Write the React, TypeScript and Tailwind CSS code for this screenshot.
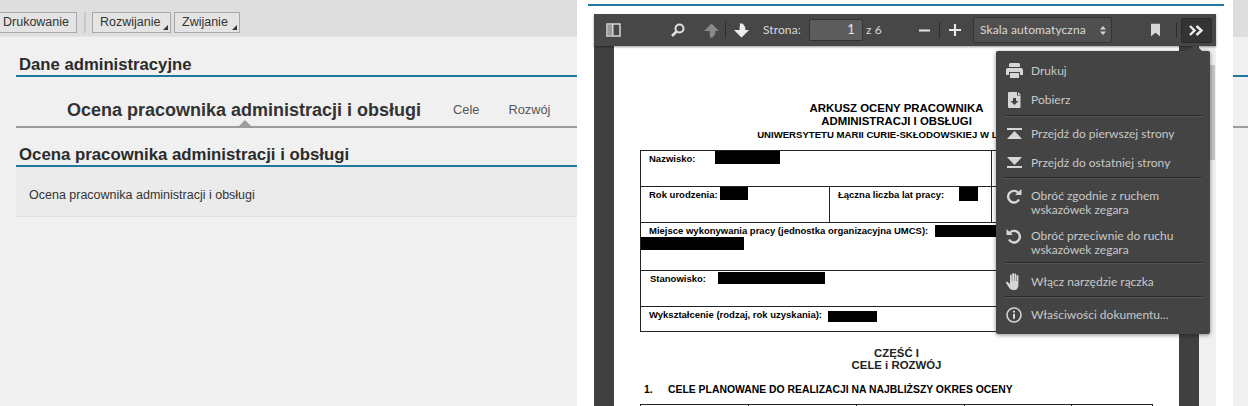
import React from "react";

const Redact = ({ left, top, w, h }: { left: number; top: number; w: number; h: number }) => (
  <span className="absolute bg-black" style={{ left, top, width: w, height: h }} />
);

const Sep = ({ mb }: { mb: number }) => (
  <div className="h-px bg-[#2a2a2a] mx-[8px] shadow-[0_1px_0_#555]" style={{ marginBottom: mb }} />
);

const Item = ({ icon, children, h = 29, multi }: { icon: React.ReactNode; children: React.ReactNode; h?: number; multi?: boolean }) => (
  <div className={`flex ${multi ? "items-start pt-[4px]" : "items-center"}`} style={{ height: h }}>
    <div className="w-[35px] h-[14px] flex items-center justify-center shrink-0 pl-[1px]">{icon}</div>
    <div className="leading-[14px]">{children}</div>
  </div>
);

const c = "#d6d6d6";

const IPrinter = () => (
  <svg width="17" height="15" viewBox="0 0 17 15" fill={c}>
    <path d="M4 0h9l1 1v3H3V1zM2 5h13a2 2 0 0 1 2 2v5h-3V9H3v3H0V7a2 2 0 0 1 2-2zM4 10h9v5H4z" />
  </svg>
);
const IDownload = () => (
  <svg width="13" height="16" viewBox="0 0 13 16" fill={c}>
    <path d="M1 0h8v3.500h3.500V15a1 1 0 0 1-1 1H1a1 1 0 0 1-1-1V1a1 1 0 0 1 1-1z" />
    <path d="M10 0l3 3h-3z" />
    <path d="M5 6h3v3h2.500l-4 4-4-4H5z" fill="#444" />
  </svg>
);
const IFirst = () => (
  <svg width="15" height="11" viewBox="0 0 15 11" fill={c}>
    <rect x="0" y="0" width="15" height="2" />
    <path d="M7.500 3L15 11H0z" />
  </svg>
);
const ILast = () => (
  <svg width="15" height="11" viewBox="0 0 15 11" fill={c}>
    <rect x="0" y="9" width="15" height="2" />
    <path d="M7.500 8L15 0H0z" />
  </svg>
);
const ICw = () => (
  <svg width="16" height="15" viewBox="0 0 16 15" fill="none" stroke={c} strokeWidth="2.400">
    <path d="M13 10.500A5.800 5.800 0 1 1 12 3.500" />
    <path d="M9 6h6.500V0z" fill={c} stroke="none" />
  </svg>
);
const ICcw = () => (
  <svg width="16" height="15" viewBox="0 0 16 15" fill="none" stroke={c} strokeWidth="2.400">
    <path d="M3 10.500A5.800 5.800 0 1 0 4 3.500" />
    <path d="M7 6H.5V0z" fill={c} stroke="none" />
  </svg>
);
const IHand = () => (
  <svg width="16" height="17" viewBox="0 0 16 17" fill={c}>
    <path d="M4 2.500a.9.900 0 0 1 1.800 0V8h.4V1a.9.900 0 0 1 1.800 0v7h.4V1.500a.9.900 0 0 1 1.800 0V8h.4V3a.9.900 0 0 1 1.800 0v9c0 3-1.500 5-4.500 5H7c-2 0-3-1-4-2.500L0 10c-.5-1 .7-1.800 1.500-1L4 11z" />
  </svg>
);
const IInfo = () => (
  <svg width="16" height="16" viewBox="0 0 16 16" fill="none" stroke={c} strokeWidth="1.600">
    <circle cx="8" cy="8" r="7" />
    <circle cx="8" cy="4.700" r="1.100" fill={c} stroke="none" />
    <rect x="7" y="6.800" width="2" height="5" fill={c} stroke="none" />
  </svg>
);

const Btn = ({ children, caret, className = "" }: { children: React.ReactNode; caret?: boolean; className?: string }) => (
  <div className={`relative h-[21px] flex items-center pl-[7px] bg-[#e4e4e4] border border-[#a8a8a8] text-[12.500px] text-[#333] shrink-0 ${className}`}>
    {children}
    {caret && (
      <svg className="absolute right-[2px] bottom-[2px]" width="5" height="5" viewBox="0 0 5 5" fill="#333">
        <path d="M5 0v5H0z" />
      </svg>
    )}
  </div>
);

const TRow = ({ h, children }: { h: number; children?: React.ReactNode }) => (
  <div className="relative flex border-b border-[#222]" style={{ height: h }}>
    {children}
  </div>
);

export default function App() {
  return (
    <div className="w-[1248px] h-[406px] overflow-hidden flex bg-white font-['Liberation_Sans',Arial,sans-serif]">
      {/* left SAP panel */}
      <div className="w-[577px] shrink-0 flex flex-col bg-[#f0f0f0] overflow-hidden">
        <div className="h-[37px] shrink-0 bg-[#dedede] flex items-start pt-[12px] border-b border-[#e6e6e6]">
          <Btn className="w-[82px] ml-[-5px]">Drukowanie</Btn>
          <div className="w-[2px] h-[21px] bg-[#c8c8c8] ml-[7px] shrink-0" />
          <Btn caret className="w-[79px] ml-[6px]">Rozwijanie</Btn>
          <Btn caret className="w-[66px] ml-[3px]">Zwijanie</Btn>
        </div>
        <div className="pl-[16px] flex flex-col">
          <div className="h-[40px] border-b-2 border-[#20789c] flex items-end pl-[3px] text-[16.700px] leading-[20px] font-bold text-[#2b2b2b]">
            Dane administracyjne
          </div>
          <div className="relative h-[51px] border-b-2 border-[#9c9c9c] flex items-center pl-[51px] pt-[17px] text-[#333]">
            <span className="text-[18px] font-bold text-[#333]">Ocena pracownika administracji i obsługi</span>
            <span className="ml-[32px] text-[12.800px] text-[#555]">Cele</span>
            <span className="ml-[29px] text-[12.800px] text-[#555]">Rozwój</span>
            <div className="absolute left-[223px] bottom-0 w-0 h-0 border-x-[6px] border-x-transparent border-b-[6px] border-b-[#9c9c9c]" />
          </div>
          <div className="h-[39px] border-b-2 border-[#20789c] flex items-end pl-[3px] text-[16.800px] leading-[20px] font-bold text-[#2b2b2b]">
            Ocena pracownika administracji i obsługi
          </div>
          <div className="h-[50px] bg-[#ebebeb] border-b border-[#e0e0e0] flex items-center pl-[13px] pt-[8px] text-[12.500px] text-[#333]">
            Ocena pracownika administracji i obsługi
          </div>
        </div>
      </div>

      {/* middle */}
      <div className="w-[656px] shrink-0 bg-white flex flex-col">
        <div className="h-[2px] mt-[4px] ml-[11px] mr-[9px] bg-[#20789c] shrink-0" />
        <div className="relative ml-[17px] mt-[8px] w-[622px] flex-1 flex flex-col font-['Lato',sans-serif]">
          {/* pdf toolbar */}
          <div className="h-[32px] shrink-0 bg-[#474747] flex items-center text-[12px] tracking-[0.100px] text-[#d9d9d9] shadow-[0_1px_2px_rgba(0,0,0,0.4)] z-10 whitespace-nowrap">
            <svg className="ml-[12px] shrink-0" width="15" height="14" viewBox="0 0 15 14">
              <rect x="1" y="1" width="13" height="12" fill="none" stroke="#d6d6d6" strokeWidth="1.500" />
              <rect x="2" y="2" width="4" height="10" fill="#9a9a9a" />
              <rect x="6" y="1" width="1.500" height="12" fill="#d6d6d6" />
            </svg>
            <svg className="ml-[50px] shrink-0" width="14" height="14" viewBox="0 0 14 14" fill="none" stroke="#e0e0e0">
              <circle cx="8.500" cy="5.500" r="4" strokeWidth="2" />
              <path d="M5.500 8.500L1 13" strokeWidth="2.600" />
            </svg>
            <svg className="ml-[19px] shrink-0" width="15" height="16" viewBox="0 0 16 16" fill="#8a8a8a">
              <path d="M8 0l8 8h-4v3l-2 3-1 1H6c1-2 0-3 0-4V8H0z" transform="translate(0 1)" />
            </svg>
            <div className="w-px h-[16px] bg-[#2e2e2e] ml-[6px] shrink-0" />
            <svg className="ml-[8px] shrink-0" width="15" height="16" viewBox="0 0 16 16" fill="#eeeeee">
              <path d="M8 16l8-8h-4V5l-2-3-1-1H6c1 2 0 3 0 4v3H0z" />
            </svg>
            <span className="ml-[14px] w-[37px] shrink-0">Strona:</span>
            <div className="ml-[9px] w-[54px] h-[22px] bg-[#5c5c5c] border border-[#333] rounded-[2px] flex items-center justify-end pr-[7px] text-[#e6e6e6] text-[13px] shrink-0">
              1
            </div>
            <span className="ml-[3px] w-[16px] shrink-0">z 6</span>
            <svg className="ml-[37px] shrink-0" width="11" height="3" viewBox="0 0 11 3" fill="#e6e6e6">
              <rect width="11" height="2" y="0.500" />
            </svg>
            <div className="w-px h-[16px] bg-[#2e2e2e] ml-[9px] shrink-0" />
            <svg className="ml-[9px] shrink-0" width="12" height="12" viewBox="0 0 11 11" fill="#e6e6e6">
              <path d="M4.500 0h2v4.500H11v2H6.500V11h-2V6.500H0v-2h4.500z" />
            </svg>
            <div className="ml-[12px] w-[139px] h-[26px] bg-[#4f4f4f] border border-[#343434] rounded-[2px] flex items-center pl-[6px] shrink-0">
              <span className="w-[120px]">Skala automatyczna</span>
              <svg width="6" height="9" viewBox="0 0 6 9" fill="#d6d6d6">
                <path d="M3 0l3 3.500H0zM3 9L0 5.500h6z" />
              </svg>
            </div>
            <svg className="ml-[39px] shrink-0" width="9" height="14" viewBox="0 0 10 14" fill="#d8d8d8">
              <path d="M0 0h10v14l-5-4-5 4z" />
            </svg>
            <div className="w-px h-[16px] bg-[#2e2e2e] ml-[16px] shrink-0" />
            <div className="ml-[4px] w-[31px] h-[25px] bg-[#343434] border border-[#2a2a2a] rounded-[2px] flex items-center justify-center shrink-0">
              <svg width="15" height="11" viewBox="0 0 15 11" fill="none" stroke="#eeeeee" strokeWidth="2.400">
                <path d="M1 1l4.500 4.500L1 10M7.500 1l5 4.500-5 4.500" />
              </svg>
            </div>
          </div>

          {/* pdf body */}
          <div className="flex-1 flex min-h-0">
            <div className="w-[20px] bg-[#404040]" />
            <div className="w-[565px] bg-white relative font-['Liberation_Sans',Arial,sans-serif] text-black overflow-hidden">
              <div className="pt-[56px] flex flex-col items-center font-bold">
                <div className="text-[11.400px] leading-[13px]">ARKUSZ OCENY PRACOWNIKA</div>
                <div className="text-[11.400px] leading-[13px]">ADMINISTRACJI I OBSŁUGI</div>
                <div className="text-[9.600px] leading-[13px] whitespace-nowrap">UNIWERSYTETU MARII CURIE-SKŁODOWSKIEJ W LUBLINIE</div>
              </div>
              <div className="ml-[26px] mt-[9px] w-[513px] border border-b-0 border-[#222] text-[9.500px] font-bold leading-[12px]">
                <TRow h={36}>
                  <div className="w-[351px] border-r border-[#222] pl-[8px] pt-[2px]">Nazwisko:</div>
                  <Redact left={74} top={0} w={65} h={13} />
                </TRow>
                <TRow h={36}>
                  <div className="w-[189px] border-r border-[#222] pl-[8px] pt-[2px]">Rok urodzenia:</div>
                  <div className="w-[162px] border-r border-[#222] pl-[8px] pt-[2px]">Łączna liczba lat pracy:</div>
                  <Redact left={79} top={0} w={28} h={13} />
                  <Redact left={318} top={0} w={19} h={14} />
                </TRow>
                <TRow h={48}>
                  <div className="pl-[8px] pt-[2px]">Miejsce wykonywania pracy (jednostka organizacyjna UMCS):</div>
                  <Redact left={294} top={2} w={66} h={12} />
                  <Redact left={0} top={14} w={103} h={13} />
                </TRow>
                <TRow h={36}>
                  <div className="pl-[9px] pt-[2px]">Stanowisko:</div>
                  <Redact left={77} top={1} w={107} h={12} />
                </TRow>
                <TRow h={25}>
                  <div className="pl-[8px] pt-[2px]">Wykształcenie (rodzaj, rok uzyskania):</div>
                  <Redact left={187} top={4} w={49} h={11} />
                </TRow>
              </div>
              <div className="mt-[15px] flex flex-col items-center text-[11.400px] leading-[12px] font-bold text-[#222]">
                <div>CZĘŚĆ I</div>
                <div>CELE i ROZWÓJ</div>
              </div>
              <div className="mt-[13px] ml-[30px] flex text-[10.400px] leading-[12px] font-bold">
                <span className="w-[24px]">1.</span>
                <span className="whitespace-nowrap">CELE PLANOWANE DO REALIZACJI NA NAJBLIŻSZY OKRES OCENY</span>
              </div>
              <div className="mt-[8px] ml-[26px] w-[513px] h-[8px] border-t border-x border-[#222] flex">
                <div className="w-[108px] border-r border-[#222]" />
                <div className="w-[108px] border-r border-[#222]" />
                <div className="w-[108px] border-r border-[#222]" />
                <div className="w-[107px] border-r border-[#222]" />
              </div>
            </div>
            <div className="w-[20px] bg-[#404040]" />
            <div className="w-[17px] bg-[#f0f0f0] flex justify-end pr-[1px]">
              <div className="w-[5px] h-[95px] mt-[19px] bg-[#c4c4c4]" />
            </div>
          </div>

          {/* dropdown menu */}
          <div className="absolute left-[402px] top-[37px] w-[214px] h-[283px] z-20 bg-[#444444] rounded-[2px] shadow-[0_1px_4px_rgba(0,0,0,0.45)] text-[12px] text-[#c8c8c8] pt-[5px]">
            <div className="absolute right-[8px] top-[-7px] w-0 h-0 border-x-[7px] border-x-transparent border-b-[7px] border-b-[#444444]" />
            <Item icon={<IPrinter />}>Drukuj</Item>
            <Item icon={<IDownload />} h={30}>Pobierz</Item>
            <Sep mb={3} />
            <Item icon={<IFirst />}>Przejdź do pierwszej strony</Item>
            <Item icon={<ILast />}>Przejdź do ostatniej strony</Item>
            <Sep mb={7} />
            <Item icon={<ICw />} h={40} multi>Obróć zgodnie z ruchem<br />wskazówek zegara</Item>
            <Item icon={<ICcw />} h={37} multi>Obróć przeciwnie do ruchu<br />wskazówek zegara</Item>
            <Sep mb={4} />
            <Item icon={<IHand />}>Włącz narzędzie rączka</Item>
            <Sep mb={4} />
            <Item icon={<IInfo />} h={28}>Właściwości dokumentu...</Item>
          </div>
        </div>
      </div>

      {/* right strip */}
      <div className="flex-1 bg-[#f0f0f0] flex flex-col">
        <div className="h-[37px] bg-[#dedede]" />
        <div className="h-[40px] border-b-2 border-[#20789c]" />
        <div className="h-[51px] border-b-2 border-[#9c9c9c]" />
      </div>
    </div>
  );
}
